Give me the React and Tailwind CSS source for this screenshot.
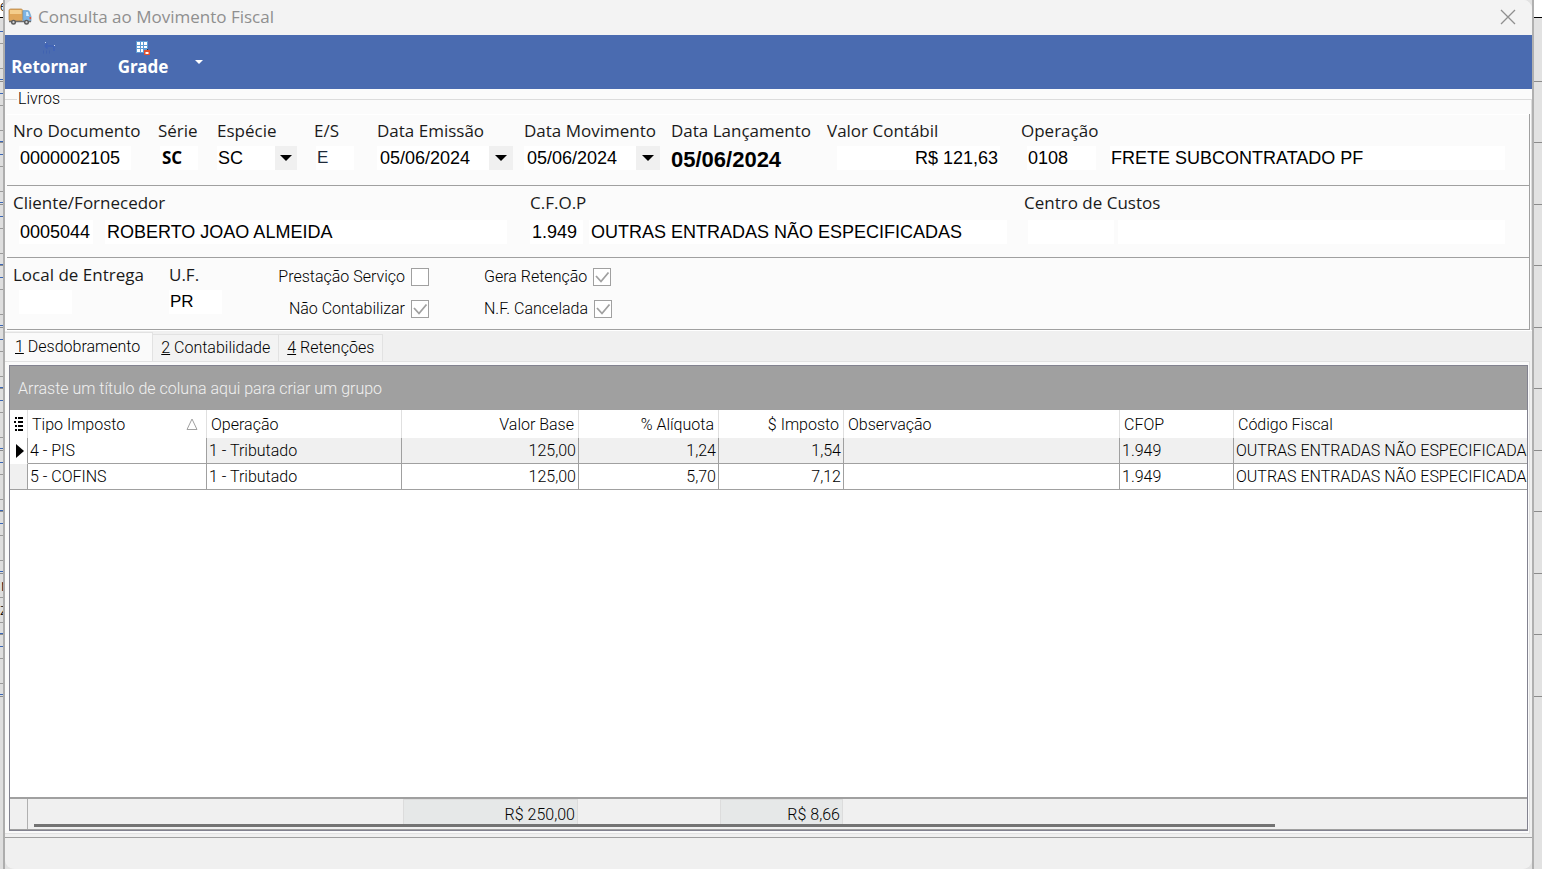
import { useState } from 'react';

const taxRows = [
  { tipo: '4 - PIS', operacao: '1 - Tributado', base: '125,00', aliquota: '1,24', imposto: '1,54', obs: '', cfop: '1.949', fiscal: 'OUTRAS ENTRADAS NÃO ESPECIFICADAS' },
  { tipo: '5 - COFINS', operacao: '1 - Tributado', base: '125,00', aliquota: '5,70', imposto: '7,12', obs: '', cfop: '1.949', fiscal: 'OUTRAS ENTRADAS NÃO ESPECIFICADAS' },
];

const tabs = [
  { key: '1', label: 'Desdobramento' },
  { key: '2', label: 'Contabilidade' },
  { key: '4', label: 'Retenções' },
];

const valueFont = "font-['Liberation_Sans',sans-serif] text-[18px] font-normal leading-6";
const serieFont = "font-['Open_Sans','Noto_Sans',sans-serif] text-[17px] font-bold leading-6";

function TruckIcon() {
  return (
    <svg width="24" height="18" viewBox="0 0 24 18" aria-hidden="true">
      <rect x="1" y="1" width="13.5" height="12" rx="1.5" fill="#e0a65a" stroke="#b98a4c" strokeWidth="0.8" />
      <path d="M2 2h11.5v4H2z" fill="#f4cd8c" />
      <path d="M15 2.6h4.6c.9 0 1.5.5 1.8 1.3L23 8.5v5h-8z" fill="#7db4e4" stroke="#6c9fc9" strokeWidth="0.7" />
      <path d="M18.2 4h1.6l1.3 4h-2.9z" fill="#d6ecfb" />
      <rect x="21.5" y="9" width="1.6" height="2.2" fill="#e5533a" />
      <path d="M1 12.8h22v1.4H1z" fill="#6c6c6c" />
      <circle cx="5.5" cy="14.2" r="2.5" fill="#5a5a5a" />
      <circle cx="5.5" cy="14.2" r="1.1" fill="#cfcfcf" />
      <circle cx="18.5" cy="14.2" r="2.5" fill="#5a5a5a" />
      <circle cx="18.5" cy="14.2" r="1.1" fill="#cfcfcf" />
    </svg>
  );
}

function ReturnIcon() {
  return (
    <svg width="14" height="14" viewBox="0 0 14 14" aria-hidden="true">
      <path d="M3 5h7a2 2 0 0 1 2 2v3M3 5l2.5-2.5M3 5l2.5 2.5" fill="none" stroke="#3f63b8" strokeWidth="1.6" />
      <path d="M1 9.5h1v3H1zM4 9.5h1v3H4zM7 9.5h1v3H7z" fill="#4163b0" />
      <path d="M3 1h1v1H3zM12 4h1v1h-1z" fill="#c9d8f5" />
    </svg>
  );
}

function GridSaveIcon() {
  return (
    <svg width="14" height="14" viewBox="0 0 14 14" aria-hidden="true">
      <rect x="0" y="0" width="12" height="12" fill="#5b9bd5" />
      <path d="M1 1h3v3H1zM5 1h2v3H5zM8 1h3v3H8zM1 5h3v2H1zM5 5h2v2H5zM8 5h3v2H8zM1 8h3v3H1zM5 8h2v3H5z" fill="#ffffff" />
      <path d="M8 9h6v5H8z" fill="#e2512f" />
      <path d="M9.5 11h3v2h-3z" fill="#ffffff" />
      <path d="M11 8h1v1h-1z" fill="#40302c" />
    </svg>
  );
}

function Caret() {
  return (
    <svg width="12" height="6" viewBox="0 0 12 6" aria-hidden="true">
      <path d="M0 0h12L6 6z" fill="currentColor" />
    </svg>
  );
}

function Field({ label, id, children, className = '', loose = false }) {
  return (
    <div className={`flex flex-col ${loose ? 'gap-[5px]' : 'gap-[3px]'} ${className}`}>
      <label htmlFor={id} className="whitespace-nowrap font-['Open_Sans','Noto_Sans',sans-serif] text-[17px] font-normal leading-6 text-[#1a1a1a]">
        {label}
      </label>
      <div className="flex">{children}</div>
    </div>
  );
}

function TextBox({ id, value = '', label, font = valueFont, className = '' }) {
  return (
    <input
      id={id}
      aria-label={label}
      defaultValue={value}
      className={`h-6 min-w-0 bg-white outline-none ${font} ${className}`}
    />
  );
}

function DateBox({ id, value }) {
  return (
    <>
      <TextBox id={id} value={value} className="w-28 px-[3px]" />
      <button type="button" aria-label="Abrir calendário" className="flex h-6 w-6 items-center justify-center bg-[#f0f0f0] text-black">
        <Caret />
      </button>
    </>
  );
}

function CheckOption({ id, label, defaultChecked = false }) {
  return (
    <div className="flex h-7 items-center gap-1.5">
      <label htmlFor={id} className="whitespace-nowrap">{label}</label>
      <span className="relative flex h-[18px] w-[18px]">
        <input
          id={id}
          type="checkbox"
          defaultChecked={defaultChecked}
          className="peer h-full w-full appearance-none border border-[#a0a0a0] bg-white"
        />
        <svg viewBox="0 0 18 18" className="pointer-events-none absolute inset-0 hidden peer-checked:block" aria-hidden="true">
          <path d="M3 8l5 5.5 7.5-9" fill="none" stroke="#a0a0a0" strokeWidth="1.8" />
        </svg>
      </span>
    </div>
  );
}

// Slice of the window that sits behind this one
function BackdropLines({ blue = false }) {
  return (
    <>
      {Array.from({ length: 10 }, (_, i) => (
        <div key={i} className={`relative flex shrink-0 flex-col border-t border-[#8c8c8c] ${i % 2 ? 'h-[62px]' : 'h-[61px]'}`}>
          {blue && i !== 8 && (
            <>
              <div className="mt-[11px] h-px bg-[#3a66b5]" />
              <div className="mt-[11px] h-px bg-[#9a9a9a]" />
              <div className="mt-6 h-px bg-[#9a9a9a]" />
              <div className="mt-2.5 h-px bg-[#3a66b5]" />
            </>
          )}
          {blue && i === 8 && (
            <>
              <div className="h-[23px] pl-px leading-6">r</div>
              <div className="h-px bg-[#9a9a9a]" />
              <div className="h-6 leading-6">z</div>
              <div className="h-px bg-[#9a9a9a]" />
              <div className="mt-2.5 h-px bg-[#3a66b5]" />
            </>
          )}
        </div>
      ))}
      <div className="flex-1 border-t border-[#8c8c8c]" />
    </>
  );
}

function BookFields() {
  return (
    <div className="bg-[#fbfbfb]">
      <fieldset className="min-w-0 border-t border-r border-[#dcdcdc]">
        <legend className="ml-3 px-px leading-5">Livros</legend>
        <div className="mt-[5px] mr-px ml-0.5 border-r border-[#a0a0a0]">
          <div className="flex h-[72px] border-t border-b border-t-white border-b-[#a0a0a0] pt-1 pl-1.5">
            <Field label="Nro Documento" id="doc" className="w-[145px]">
              <TextBox id="doc" value="0000002105" className="ml-1.5 w-28 px-px" />
            </Field>
            <Field label="Série" id="serie" className="w-[59px]">
              <TextBox id="serie" value="SC" font={serieFont} className="ml-0.5 w-[38px] px-0.5" />
            </Field>
            <Field label="Espécie" id="especie" className="w-[97px]">
              <span className="relative flex h-6 w-20">
                <select id="especie" defaultValue="SC" className={`w-full appearance-none bg-white px-px outline-none ${valueFont}`}>
                  <option>SC</option>
                </select>
                <span className="pointer-events-none absolute inset-y-0 right-0 flex w-[22px] items-center justify-center bg-[#f0f0f0]">
                  <Caret />
                </span>
              </span>
            </Field>
            <Field label="E/S" id="es" className="w-[63px]">
              <TextBox id="es" value="E" font="font-['Liberation_Sans',sans-serif] text-[17px] font-normal leading-6" className="ml-0.5 w-[38px] px-px text-[#1f2a3a]" />
            </Field>
            <Field label="Data Emissão" id="emissao" className="w-[147px]">
              <DateBox id="emissao" value="05/06/2024" />
            </Field>
            <Field label="Data Movimento" id="movimento" className="w-[147px]">
              <DateBox id="movimento" value="05/06/2024" />
            </Field>
            <Field label="Data Lançamento" id="lancamento" className="w-[156px]">
              <output id="lancamento" className="font-['Liberation_Sans',sans-serif] text-[22px] font-bold leading-7">05/06/2024</output>
            </Field>
            <Field label="Valor Contábil" id="valor" className="w-[194px]">
              <TextBox id="valor" value="R$ 121,63" className="ml-2.5 w-[163px] px-0.5 text-right" />
            </Field>
            <Field label="Operação" id="operacao" className="flex-1 pr-6">
              <TextBox id="operacao" value="0108" className="ml-1.5 w-[69px] px-px" />
              <TextBox label="Descrição da operação" value="FRETE SUBCONTRATADO PF" className="ml-3.5 flex-1 px-px" />
            </Field>
          </div>

          <div className="flex h-[72px] border-b border-[#a0a0a0] pt-[5px] pl-1.5">
            <Field label="Cliente/Fornecedor" id="cliente" loose className="w-[517px]">
              <TextBox id="cliente" value="0005044" className="ml-1.5 w-[74px] px-px" />
              <TextBox label="Nome do cliente" value="ROBERTO JOAO ALMEIDA" className="ml-3 w-[402px] px-0.5" />
            </Field>
            <Field label="C.F.O.P" id="cfop" loose className="w-[494px]">
              <TextBox id="cfop" value="1.949" className="w-[53px] px-0.5" />
              <TextBox label="Descrição do CFOP" value="OUTRAS ENTRADAS NÃO ESPECIFICADAS" className="ml-1.5 w-[418px] px-0.5" />
            </Field>
            <Field label="Centro de Custos" id="centro" loose className="flex-1 pr-6">
              <TextBox id="centro" className="ml-1 w-[86px]" />
              <TextBox label="Descrição do centro de custos" className="ml-1 flex-1" />
            </Field>
          </div>

          <div className="flex h-[72px] border-b border-[#a0a0a0] pt-[5px] pl-1.5">
            <Field label="Local de Entrega" id="local" className="w-[156px]">
              <TextBox id="local" className="ml-1.5 w-[53px]" />
            </Field>
            <Field label="U.F." id="uf" className="w-[107px]">
              <TextBox id="uf" value="PR" font="font-['Liberation_Sans',sans-serif] text-[17px] font-normal leading-6" className="w-[53px] px-px" />
            </Field>
            <div className="flex w-[153px] flex-col items-end gap-1">
              <CheckOption id="servico" label="Prestação Serviço" />
              <CheckOption id="contabilizar" label="Não Contabilizar" defaultChecked />
            </div>
            <div className="ml-[55px] flex flex-col items-start gap-1">
              <CheckOption id="retencao" label="Gera Retenção" defaultChecked />
              <CheckOption id="cancelada" label="N.F. Cancelada" defaultChecked />
            </div>
          </div>
        </div>
      </fieldset>
    </div>
  );
}

function TaxGrid() {
  const head = 'h-7 border-r border-[#e0e0e0] px-1 text-left font-light';
  const cell = 'h-[26px] overflow-hidden border-r border-b border-[#a0a0a0] px-0.5';

  return (
    <div className="flex min-h-0 flex-1 flex-col border border-[#82828f] bg-white">
      <div className="h-11 shrink-0 bg-[#a0a0a0] px-2 leading-[46px] text-[#f0f0f0]">
        Arraste um título de coluna aqui para criar um grupo
      </div>
      <div className="min-h-0 flex-1 overflow-hidden">
        <table className="w-full table-fixed border-separate border-spacing-0 whitespace-nowrap leading-[25px]">
          <colgroup>
            <col className="w-[18px]" />
            <col className="w-[179px]" />
            <col className="w-[195px]" />
            <col className="w-[177px]" />
            <col className="w-[140px]" />
            <col className="w-[125px]" />
            <col className="w-[276px]" />
            <col className="w-[114px]" />
            <col />
          </colgroup>
          <thead>
            <tr>
              <th className="h-7 border-r border-[#e0e0e0] pl-1" aria-label="Colunas">
                <svg width="10" height="14" viewBox="0 0 10 14" aria-hidden="true">
                  <path d="M1 0h2v2H1zM0 4h2v2H0zM1 8h2v2H1zM1 12h2v2H1zM4 0h5v2H4zM4 4h5v2H4zM4 8h5v2H4zM4 12h5v2H4z" fill="#000" />
                </svg>
              </th>
              <th className={head}>
                <span className="flex items-center justify-between pr-1">
                  Tipo Imposto
                  <svg width="12" height="12" viewBox="0 0 12 12" aria-hidden="true">
                    <path d="M6 1l5 10.5H1z" fill="none" stroke="#a0a0a0" />
                  </svg>
                </span>
              </th>
              <th className={head}>Operação</th>
              <th className={`${head} text-right`}>Valor Base</th>
              <th className={`${head} text-right`}>% Alíquota</th>
              <th className={`${head} text-right`}>$ Imposto</th>
              <th className={head}>Observação</th>
              <th className={head}>CFOP</th>
              <th className="h-7 px-1 text-left font-light">Código Fiscal</th>
            </tr>
          </thead>
          <tbody>
            {taxRows.map((row, i) => (
              <tr key={row.tipo} className={i === 0 ? 'bg-[#f0f0f0]' : 'bg-white'}>
                <td className={`h-[26px] border-r border-b border-r-[#a0a0a0] ${i === 0 ? 'border-b-white bg-white' : 'border-b-[#a0a0a0] bg-[#f0f0f0]'}`}>
                  {i === 0 && (
                    <svg width="8" height="14" viewBox="0 0 8 14" className="ml-1.5" aria-hidden="true">
                      <path d="M0 0l8 7-8 7z" fill="#000" />
                    </svg>
                  )}
                </td>
                <td className={`${cell} bg-white`}>{row.tipo}</td>
                <td className={cell}>{row.operacao}</td>
                <td className={`${cell} text-right`}>{row.base}</td>
                <td className={`${cell} text-right`}>{row.aliquota}</td>
                <td className={`${cell} text-right`}>{row.imposto}</td>
                <td className={cell}>{row.obs}</td>
                <td className={cell}>{row.cfop}</td>
                <td className="h-[26px] overflow-hidden border-b border-[#a0a0a0] px-0.5">{row.fiscal}</td>
              </tr>
            ))}
          </tbody>
        </table>
      </div>
      <div className="flex h-[33px] shrink-0 flex-col border-t-2 border-b border-[#a0a0a0] bg-[#f0f0f0]">
        <div className="flex h-[25px] text-right leading-[29px]">
          <div className="h-[30px] w-[18px] shrink-0 border-r border-[#b0b0b0]" />
          <div className="w-[375px] shrink-0" />
          <div className="h-7 w-[175px] shrink-0 border border-[#dcdcdc] bg-[#e6e8e8] px-0.5">R$ 250,00</div>
          <div className="w-[142px] shrink-0" />
          <div className="h-7 w-[123px] shrink-0 border border-[#dcdcdc] bg-[#e6e8e8] px-0.5">R$ 8,66</div>
        </div>
        <div className="relative z-10 ml-6 h-[3px] w-9/11 bg-[#737373]" />
      </div>
    </div>
  );
}

export default function App() {
  const [activeTab, setActiveTab] = useState('1');

  return (
    <div className="flex h-screen w-full overflow-hidden bg-[#e2e2e2] font-['Roboto','Liberation_Sans',sans-serif] text-[16px] font-light text-black">
      <div className="flex w-[5px] shrink-0 flex-col overflow-hidden border-r-2 border-[#adadad] bg-[#dedede]">
        <div className="h-[18px] shrink-0 border-b border-black bg-white text-[14px] leading-3">e</div>
        <div className="mt-[13px] h-px shrink-0 bg-[#3a66b5]" />
        <div className="mt-[11px] h-px shrink-0 bg-[#9a9a9a]" />
        <div className="mt-6 h-px shrink-0 bg-[#9a9a9a]" />
        <div className="mt-2.5 mb-px h-px shrink-0 bg-[#3a66b5]" />
        <BackdropLines blue />
      </div>

      <main className="flex min-w-0 flex-1 flex-col overflow-hidden rounded-[9px] bg-[#f0f0f0]">
        <header className="flex h-[35px] shrink-0 items-center justify-between bg-[#f3f3f3] pr-4 pb-0.5 pl-[3px]">
          <h1 className="flex items-center gap-1.5 font-['Open_Sans','Noto_Sans',sans-serif] text-[17px] font-normal text-[#8f8f8f]">
            <TruckIcon />
            Consulta ao Movimento Fiscal
          </h1>
          <button type="button" aria-label="Fechar">
            <svg width="16" height="16" viewBox="0 0 16 16" aria-hidden="true">
              <path d="M1 1l14 14M15 1L1 15" stroke="#8f8f8f" strokeWidth="1.3" />
            </svg>
          </button>
        </header>

        <nav className="flex h-[54px] shrink-0 bg-[#4a6bb0] font-['Noto_Sans','Open_Sans',sans-serif] text-[17px] font-bold leading-6 text-white">
          <button type="button" className="flex w-[88px] flex-col items-center pt-1.5">
            <ReturnIcon />
            Retornar
          </button>
          <button type="button" className="ml-5 flex w-[60px] flex-col items-center pt-1.5">
            <GridSaveIcon />
            Grade
          </button>
          <button type="button" aria-label="Mais opções" className="ml-4 w-5">
            <svg width="8" height="4" viewBox="0 0 8 4" className="mx-auto" aria-hidden="true">
              <path d="M0 0h8L4 4z" fill="#fff" />
            </svg>
          </button>
        </nav>

        <BookFields />

        <div role="tablist" className="flex h-[31px] shrink-0 items-end border-t border-white">
          {tabs.map((tab) => (
            <button
              key={tab.key}
              type="button"
              role="tab"
              aria-selected={activeTab === tab.key}
              onClick={() => setActiveTab(tab.key)}
              className={`border-t border-r border-[#e2e2e2] ${
                activeTab === tab.key ? 'h-[29px] bg-[#fafafa] pr-3 pl-2.5' : 'h-[27px] bg-[#f3f3f3] px-2'
              }`}
            >
              <span className="underline">{tab.key}</span> {tab.label}
            </button>
          ))}
        </div>

        <div className="mr-0.5 flex min-h-0 flex-1 flex-col border-t border-r border-b border-[#e2e2e2] bg-[#fafafa] pt-[3px] pr-px pb-0.5 pl-1">
          <TaxGrid />
        </div>
        <footer className="mt-[3px] h-8 shrink-0 border-t border-[#a0a0a0]" />
      </main>

      <div className="flex w-2.5 shrink-0 flex-col overflow-hidden border-l-2 border-[#b0b0b0]">
        <div className="h-[18px] shrink-0 border-b border-black bg-white" />
        <div className="h-[63px] shrink-0" />
        <BackdropLines />
      </div>
    </div>
  );
}
